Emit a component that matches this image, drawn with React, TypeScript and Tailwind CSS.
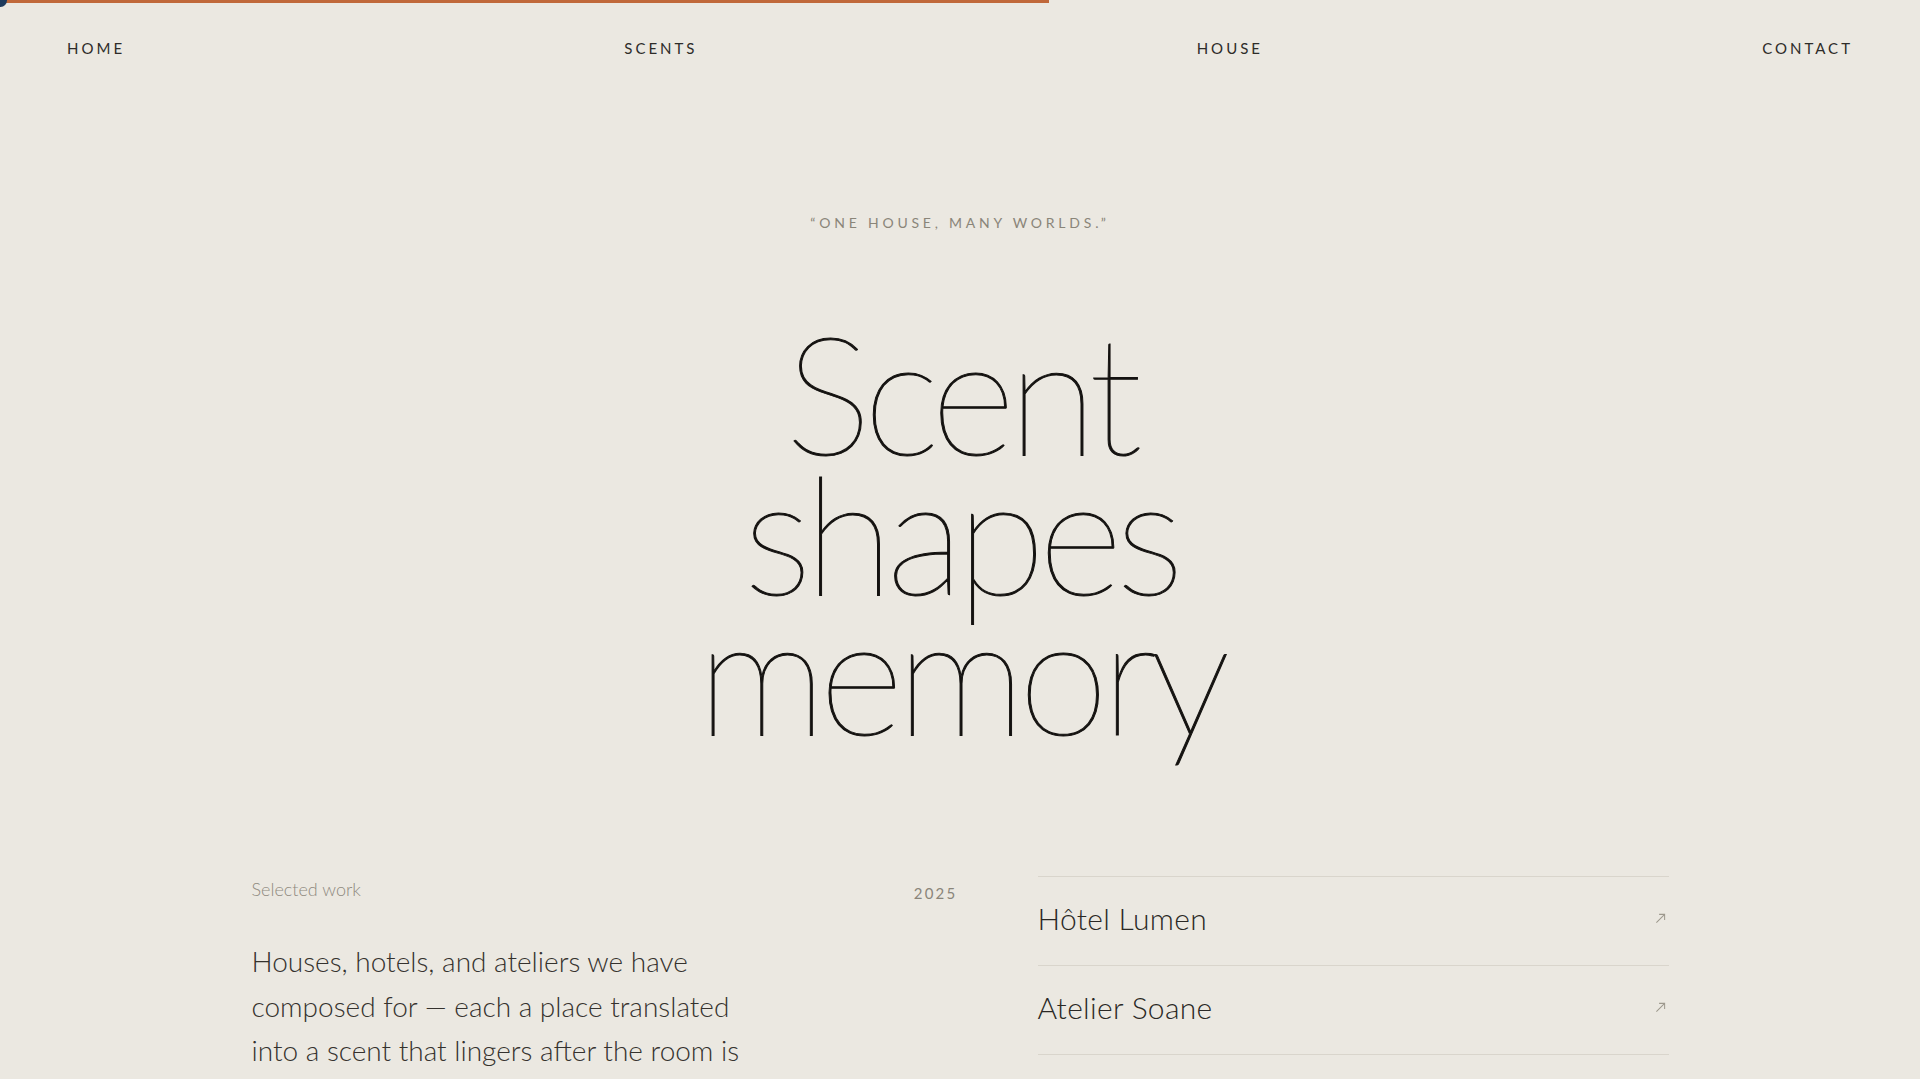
import { ReactNode } from "react";

const navItems = ["Home", "Scents", "House", "Contact"];

const projects = ["Hôtel Lumen", "Atelier Soane", "Maison Verre"];

function ArrowIcon() {
  return (
    <svg width="11" height="11" viewBox="0 0 12 12" fill="none" className="text-[#9d988d]">
      <path d="M1.5 10.5L10.5 1.5M4.5 1.5H10.5V7.5" stroke="currentColor" strokeWidth="1.1" />
    </svg>
  );
}

function ProjectRow({ children }: { children: ReactNode }) {
  return (
    <a className="flex h-[89px] items-center justify-between border-b border-[#d9d5cc] pb-[6px] pr-[3px]">
      <span className="text-[30px] font-light tracking-[0.01em] text-[#2a2825]">{children}</span>
      <ArrowIcon />
    </a>
  );
}

export default function App() {
  return (
    <div className="relative min-h-screen overflow-hidden bg-[#ebe8e1] font-['Lato','Liberation_Sans',sans-serif] text-[#1b1917]">
      {/* scroll progress */}
      <div className="absolute left-0 top-0 h-[3px] w-[1049px] bg-[#c0683a]" />
      <div className="absolute -left-[6px] -top-[6px] h-[13px] w-[13px] rounded-full bg-[#1e3a5c]" />

      {/* Header */}
      <nav className="flex items-center justify-between px-[67px] pt-[38px]">
        {navItems.map((item) => (
          <a
            key={item}
            className="text-[15px] leading-[20px] font-normal uppercase tracking-[0.2em] text-[#2e2c29]"
          >
            {item}
          </a>
        ))}
      </nav>

      {/* Hero */}
      <section className="flex flex-col items-center">
        <p className="mt-[155px] text-[14px] leading-[20px] uppercase tracking-[0.27em] text-[#8a8579]">
          “One house, many worlds.”
        </p>
        <h1 className="mt-[89px] text-center text-[164px] leading-[140px] font-extralight tracking-[-0.045em] text-[#141210] [-webkit-text-stroke:1px_#141210]">
          Scent
          <br />
          shapes
          <br />
          memory
        </h1>
      </section>

      {/* Selected work */}
      <section className="mx-auto mt-[133px] flex w-[1417px] gap-[80px]">
        <div className="w-[706px]">
          <div className="flex items-start justify-between pt-[2px]">
            <span className="text-[18px] leading-[24px] font-light text-[#8f8a7f]">Selected work</span>
            <span className="pt-[4px] text-[15px] leading-[24px] tracking-[0.15em] text-[#8a857a]">2025</span>
          </div>
          <p className="mt-[34px] w-[540px] text-[28px] leading-[44.5px] font-light text-[#35322e]">
            Houses, hotels, and ateliers we have
            <br />
            composed for — each a place translated
            <br />
            into a scent that lingers after the room is
            <br />
            empty.
          </p>
        </div>
        <div className="mt-[1px] w-[631px] border-t border-[#d9d5cc]">
          {projects.map((p) => (
            <ProjectRow key={p}>{p}</ProjectRow>
          ))}
        </div>
      </section>
    </div>
  );
}
